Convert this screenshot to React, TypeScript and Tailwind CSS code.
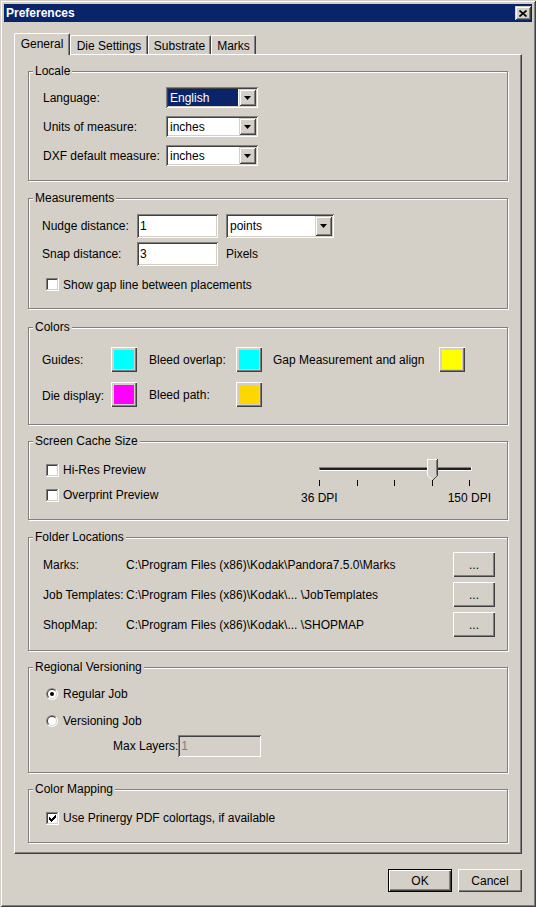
import React from 'react';

// classic 3D edges
const RAISED = 'shadow-[inset_1px_1px_0_#fff,inset_-1px_-1px_0_#404040,inset_-2px_-2px_0_#808080]';
const RAISED_SOFT = 'shadow-[inset_1px_1px_0_#d4d0c8,inset_-1px_-1px_0_#404040,inset_2px_2px_0_#fff,inset_-2px_-2px_0_#808080]';
const SUNKEN = 'shadow-[inset_1px_1px_0_#808080,inset_-1px_-1px_0_#fff,inset_2px_2px_0_#404040,inset_-2px_-2px_0_#d4d0c8]';

const GroupBox: React.FC<{ title: string; className?: string; children?: React.ReactNode }> = ({ title, className, children }) => (
  <div className={`border border-[#808080] shadow-[inset_1px_1px_0_#fff,1px_1px_0_#fff] ${className ?? ''}`}>
    <div className="-mt-[8px] ml-[4px] w-fit bg-[#d4d0c8] px-[2px]">{title}</div>
    {children}
  </div>
);

const DropButton = () => (
  <div className={`flex w-[17px] items-center justify-center bg-[#d4d0c8] ${RAISED_SOFT}`}>
    <svg width="7" height="4" viewBox="0 0 7 4">
      <polygon points="0,0 7,0 3.5,4" fill="#000" />
    </svg>
  </div>
);

const Combo: React.FC<{ value: string; selected?: boolean; className?: string }> = ({ value, selected, className }) => (
  <div className={`flex bg-white p-[2px] ${SUNKEN} ${className ?? ''}`}>
    <div
      className={`mr-[1px] flex flex-1 items-center pl-[2px] ${selected ? 'bg-[#0a246a] text-white' : ''}`}
    >
      {value}
    </div>
    <DropButton />
  </div>
);

const TextInput: React.FC<{ value: string; className?: string; disabled?: boolean }> = ({ value, className, disabled }) => (
  <div
    className={`flex items-center pl-[3px] ${SUNKEN} ${disabled ? 'bg-[#d4d0c8] text-[#808080]' : 'bg-white'} ${className ?? ''}`}
  >
    {value}
  </div>
);

const Checkbox: React.FC<{ checked?: boolean }> = ({ checked }) => (
  <svg width="13" height="13" viewBox="0 0 13 13" shapeRendering="crispEdges" className="shrink-0">
    <rect x="0" y="0" width="13" height="13" fill="#fff" />
    <rect x="0" y="0" width="12" height="1" fill="#808080" />
    <rect x="0" y="0" width="1" height="12" fill="#808080" />
    <rect x="1" y="1" width="10" height="1" fill="#404040" />
    <rect x="1" y="1" width="1" height="10" fill="#404040" />
    <rect x="1" y="11" width="11" height="1" fill="#d4d0c8" />
    <rect x="11" y="1" width="1" height="11" fill="#d4d0c8" />
    {checked && (
      <g fill="#000">
        <rect x="9" y="3" width="1" height="1" />
        <rect x="8" y="4" width="2" height="1" />
        <rect x="3" y="5" width="1" height="1" />
        <rect x="7" y="5" width="3" height="1" />
        <rect x="3" y="6" width="2" height="1" />
        <rect x="6" y="6" width="3" height="1" />
        <rect x="3" y="7" width="5" height="1" />
        <rect x="4" y="8" width="3" height="1" />
        <rect x="5" y="9" width="1" height="1" />
      </g>
    )}
  </svg>
);

const Radio: React.FC<{ checked?: boolean }> = ({ checked }) => (
  <svg width="12" height="12" viewBox="0 0 12 12" className="shrink-0">
    <circle cx="6" cy="6" r="6" fill="#fff" />
    <path d="M1.757 10.243 A6 6 0 0 1 10.243 1.757 Z" fill="#808080" />
    <circle cx="6" cy="6" r="5" fill="#d4d0c8" />
    <path d="M2.464 9.536 A5 5 0 0 1 9.536 2.464 Z" fill="#404040" />
    <circle cx="6" cy="6" r="4" fill="#fff" />
    {checked && <circle cx="6" cy="6" r="2" fill="#000" />}
  </svg>
);

const Swatch: React.FC<{ color: string }> = ({ color }) => (
  <div className={`h-[25px] w-[26px] shrink-0 bg-[#d4d0c8] p-[3px] ${RAISED}`}>
    <div className={`h-full w-full ${color}`} />
  </div>
);

const Slider = () => (
  <svg width="190" height="32" viewBox="0 0 190 32" shapeRendering="crispEdges">
    {/* track */}
    <rect x="18" y="10" width="153" height="4" fill="#fff" />
    <rect x="18" y="10" width="152" height="1" fill="#808080" />
    <rect x="18" y="10" width="1" height="3" fill="#808080" />
    <rect x="19" y="11" width="151" height="2" fill="#202020" />
    {/* thumb */}
    <polygon points="126,2 136,2 136,18 131,23 126,18" fill="#d4d0c8" />
    <rect x="126" y="2" width="10" height="1" fill="#fff" />
    <rect x="126" y="2" width="1" height="16" fill="#fff" />
    <rect x="136" y="2" width="1" height="17" fill="#404040" />
    <rect x="135" y="3" width="1" height="15" fill="#808080" />
    <g shapeRendering="auto">
      <line x1="126.5" y1="18" x2="131" y2="22.5" stroke="#fff" />
      <line x1="136.5" y1="18.5" x2="131.5" y2="23.5" stroke="#404040" />
    </g>
    {/* ticks */}
    {[18, 56, 93, 131, 168].map((x) => (
      <rect key={x} x={x} y="23" width="1" height="6" fill="#000" />
    ))}
  </svg>
);

const PushButton: React.FC<{ label: string; isDefault?: boolean }> = ({ label, isDefault }) => (
  <div
    className={`flex h-[23px] w-[64px] items-center justify-center bg-[#d4d0c8] ${RAISED} ${isDefault ? 'border border-black' : ''}`}
  >
    {label}
  </div>
);

const Tab: React.FC<{ label: string; width: string; active?: boolean }> = ({ label, width, active }) => (
  <div
    className={`flex justify-center rounded-t-[2px] border-l border-t border-r border-l-white border-t-white border-r-[#404040] bg-[#d4d0c8] pt-[3px] shadow-[inset_-1px_0_0_#808080] ${width} ${active ? 'relative z-10 -mb-px h-[22px]' : 'h-[19px]'}`}
  >
    {label}
  </div>
);

export default function App() {
  return (
    <div className="flex h-[907px] w-[536px] flex-col bg-[#d4d0c8] p-[4px] font-['Liberation_Sans',Arial,sans-serif] text-[12px] leading-[14px] text-black shadow-[inset_1px_1px_0_#d4d0c8,inset_-1px_-1px_0_#404040,inset_2px_2px_0_#fff,inset_-2px_-2px_0_#808080]">
      {/* Title bar */}
      <div className="flex h-[18px] items-center justify-between bg-[#0a246a] pl-[2px] pr-[1px]">
        <span className="font-bold text-white">Preferences</span>
        <div className={`flex h-[14px] w-[16px] items-center justify-center bg-[#d4d0c8] ${RAISED_SOFT}`}>
          <svg width="8" height="7" viewBox="0 0 8 7">
            <path d="M0.5 0.5 L7.5 6.5 M7.5 0.5 L0.5 6.5" stroke="#000" strokeWidth="1.6" />
          </svg>
        </div>
      </div>

      <div className="px-[10px] pt-[11px]">
        {/* Tabs */}
        <div className="flex items-end">
          <Tab label="General" width="w-[56px]" active />
          <Tab label="Die Settings" width="w-[78px]" />
          <Tab label="Substrate" width="w-[63px]" />
          <Tab label="Marks" width="w-[45px]" />
        </div>

        {/* Tab panel */}
        <div className="border-b border-l border-r border-t border-b-[#404040] border-l-white border-r-[#404040] border-t-white px-[13px] pb-[10px] pt-[16px] shadow-[inset_-1px_-1px_0_#808080]">
          {/* Locale */}
          <GroupBox title="Locale" className="h-[110px]">
            <div className="ml-[14px] mt-[9px] flex flex-col gap-[8px]">
              <div className="flex h-[21px] items-center">
                <span className="w-[123px]">Language:</span>
                <Combo value="English" selected className="h-[21px] w-[92px]" />
              </div>
              <div className="flex h-[21px] items-center">
                <span className="w-[123px]">Units of measure:</span>
                <Combo value="inches" className="h-[21px] w-[92px]" />
              </div>
              <div className="flex h-[21px] items-center">
                <span className="w-[123px]">DXF default measure:</span>
                <Combo value="inches" className="h-[21px] w-[92px]" />
              </div>
            </div>
          </GroupBox>

          {/* Measurements */}
          <GroupBox title="Measurements" className="mt-[17px] h-[111px]">
            <div className="ml-[13px] mt-[9px] flex flex-col gap-[4px]">
              <div className="flex h-[24px] items-center">
                <span className="w-[95px]">Nudge distance:</span>
                <TextInput value="1" className="h-[24px] w-[81px]" />
                <Combo value="points" className="ml-[8px] h-[24px] w-[108px]" />
              </div>
              <div className="flex h-[24px] items-center">
                <span className="w-[95px]">Snap distance:</span>
                <TextInput value="3" className="h-[24px] w-[81px]" />
                <span className="ml-[8px]">Pixels</span>
              </div>
            </div>
            <div className="ml-[17px] mt-[12px] flex h-[13px] items-center gap-[4px]">
              <Checkbox />
              <span>Show gap line between placements</span>
            </div>
          </GroupBox>

          {/* Colors */}
          <GroupBox title="Colors" className="mt-[18px] h-[98px]">
            <div className="ml-[13px] mt-[13px] flex items-center">
              <span className="w-[69px]">Guides:</span>
              <Swatch color="bg-[#00ffff]" />
              <span className="ml-[12px] w-[87px]">Bleed overlap:</span>
              <Swatch color="bg-[#00ffff]" />
              <span className="ml-[11px] w-[166px]">Gap Measurement and align</span>
              <Swatch color="bg-[#ffff00]" />
            </div>
            <div className="ml-[13px] mt-[10px] flex items-center">
              <span className="w-[69px] pt-[3px]">Die display:</span>
              <Swatch color="bg-[#ff00ff]" />
              <span className="ml-[12px] w-[87px]">Bleed path:</span>
              <Swatch color="bg-[#ffd700]" />
            </div>
          </GroupBox>

          {/* Screen Cache Size */}
          <GroupBox title="Screen Cache Size" className="mt-[16px] h-[79px]">
            <div className="flex">
              <div className="ml-[17px] mt-[15px] flex w-[255px] flex-col gap-[11px]">
                <div className="flex h-[14px] items-center gap-[4px]">
                  <Checkbox />
                  <span>Hi-Res Preview</span>
                </div>
                <div className="flex h-[14px] items-center gap-[4px]">
                  <Checkbox />
                  <span>Overprint Preview</span>
                </div>
              </div>
              <div className="mt-[9px] w-[190px]">
                <Slider />
                <div className="mt-[2px] flex justify-between">
                  <span>36 DPI</span>
                  <span>150 DPI</span>
                </div>
              </div>
            </div>
          </GroupBox>

          {/* Folder Locations */}
          <GroupBox title="Folder Locations" className="mt-[17px] h-[114px]">
            <div className="ml-[14px] mt-[8px] flex w-[452px] flex-col gap-[5px]">
              {[
                ['Marks:', 'C:\\Program Files (x86)\\Kodak\\Pandora7.5.0\\Marks'],
                ['Job Templates:', 'C:\\Program Files (x86)\\Kodak\\... \\JobTemplates'],
                ['ShopMap:', 'C:\\Program Files (x86)\\Kodak\\... \\SHOPMAP'],
              ].map(([label, path]) => (
                <div key={label} className="flex h-[25px] items-center">
                  <span className="w-[83px] whitespace-nowrap">{label}</span>
                  <span className="flex-1 whitespace-pre">{path}</span>
                  <div className={`flex h-[25px] w-[42px] items-center justify-center bg-[#d4d0c8] ${RAISED}`}>...</div>
                </div>
              ))}
            </div>
          </GroupBox>

          {/* Regional Versioning */}
          <GroupBox title="Regional Versioning" className="mt-[16px] h-[106px]">
            <div className="ml-[17px] mt-[13px] flex flex-col gap-[13px]">
              <div className="flex h-[14px] items-center gap-[5px]">
                <Radio checked />
                <span>Regular Job</span>
              </div>
              <div className="flex h-[14px] items-center gap-[5px]">
                <Radio />
                <span>Versioning Job</span>
              </div>
            </div>
            <div className="ml-[84px] mt-[7px] flex h-[22px] items-center">
              <span>Max Layers:</span>
              <TextInput value="1" disabled className="h-[22px] w-[83px]" />
            </div>
          </GroupBox>

          {/* Color Mapping */}
          <GroupBox title="Color Mapping" className="mt-[16px] h-[54px]">
            <div className="ml-[17px] mt-[15px] flex h-[14px] items-center gap-[4px]">
              <Checkbox checked />
              <span>Use Prinergy PDF colortags, if available</span>
            </div>
          </GroupBox>
        </div>

        {/* Dialog buttons */}
        <div className="mt-[15px] flex justify-end gap-[6px]">
          <PushButton label="OK" isDefault />
          <PushButton label="Cancel" />
        </div>
      </div>
    </div>
  );
}
